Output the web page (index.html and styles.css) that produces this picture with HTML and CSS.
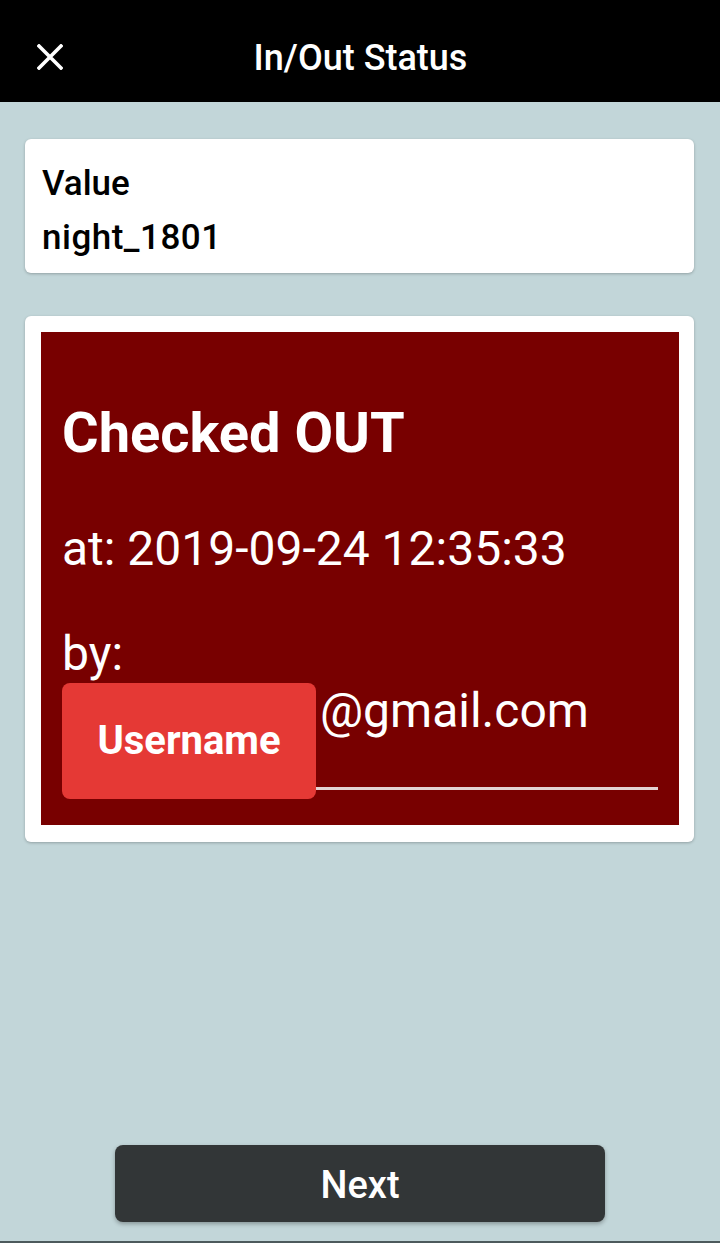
FILE: index.html
```html
<!DOCTYPE html>
<html lang="en">
<head>
<meta charset="utf-8">
<title>In/Out Status</title>
<link rel="stylesheet" href="styles.css">
</head>
<body>
<div class="screen">
  <header class="appbar">
    <button class="close" aria-label="Close">
      <svg width="26" height="26" viewBox="0 0 26 26"><path d="M2 2 L24 24 M24 2 L2 24" stroke="#fff" stroke-width="3.6" stroke-linecap="square" fill="none"/></svg>
    </button>
    <h1 class="title">In/Out Status</h1>
    <span class="spacer"></span>
  </header>
  <main class="content">
    <section class="card value-card">
      <div class="label">Value</div>
      <div class="value">night_1801</div>
    </section>
    <section class="card status-card">
      <div class="status">
        <div class="status-title">Checked OUT</div>
        <div class="status-at">at: 2019-09-24 12:35:33</div>
        <div class="status-by">by:</div>
        <div class="email-field">
          <span class="gap"></span>@gmail.com
          <div class="redact">Username</div>
        </div>
      </div>
    </section>
    <div class="actions">
      <button class="next">Next</button>
    </div>
  </main>
</div>
</body>
</html>
```
FILE: styles.css
```css
* { box-sizing: border-box; }
html, body { margin: 0; padding: 0; }
body {
  font-family: Roboto, "Noto Sans", "Liberation Sans", sans-serif;
  background: #c2d6d9;
}
.screen {
  width: 720px;
  height: 1243px;
  display: flex;
  flex-direction: column;
  background: #c2d6d9;
  border-bottom: 2px solid #4c5a5c;
}
.appbar {
  height: 102px;
  background: #000;
  display: flex;
  align-items: center;
  padding: 0 0 0 37px;
}
.close {
  width: 26px;
  height: 26px;
  padding: 0;
  margin: 12px 0 0 0;
  border: 0;
  background: none;
  display: flex;
}
.title {
  flex: 1;
  margin: 14px 0 0 0;
  text-align: center;
  color: #fff;
  font-size: 36px;
  font-weight: 500;
  line-height: 40px;
  transform: translateX(-31px);
}
.spacer { width: 0; }
.content {
  flex: 1;
  display: flex;
  flex-direction: column;
  padding: 37px 26px 19px 25px;
}
.card {
  background: #fff;
  border-radius: 6px;
  box-shadow: 0 1px 3px rgba(0,0,0,0.25);
}
.value-card {
  height: 134px;
  padding: 18px 17px 8px 17px;
  font-size: 35px;
  font-weight: 500;
  line-height: 54px;
  color: #000;
}
.value { letter-spacing: 0.5px; }
.status-card {
  margin-top: 43px;
  padding: 16px 15px 17px 16px;
}
.status {
  background: #780000;
  color: #fff;
  padding: 68px 21px 35px 21px;
}
.status-title {
  font-size: 56px;
  font-weight: 700;
  line-height: 66px;
}
.status-at {
  margin-top: 55px;
  font-size: 48px;
  line-height: 56px;
}
.status-by {
  margin-top: 48px;
  font-size: 48px;
  line-height: 57px;
}
.email-field {
  position: relative;
  font-size: 48px;
  line-height: 57px;
  padding-bottom: 48px;
  border-bottom: 3px solid #e3d3d3;
}
.gap {
  display: inline-block;
  width: 258px;
}
.redact {
  position: absolute;
  left: 0;
  top: 1px;
  width: 254px;
  height: 116px;
  background: #e53935;
  border-radius: 8px;
  display: flex;
  align-items: center;
  justify-content: center;
  font-size: 40px;
  font-weight: 700;
  line-height: 1;
  color: #fff;
}
.actions {
  margin-top: auto;
  display: flex;
  justify-content: center;
  padding-left: 1px;
}
.next {
  width: 490px;
  height: 77px;
  border: 0;
  border-radius: 8px;
  background: #323637;
  color: #fff;
  font-family: Roboto, "Noto Sans", "Liberation Sans", sans-serif;
  font-size: 38px;
  font-weight: 500;
  padding-top: 4px;
  box-shadow: 0 2px 4px rgba(0,0,0,0.3);
}
```
